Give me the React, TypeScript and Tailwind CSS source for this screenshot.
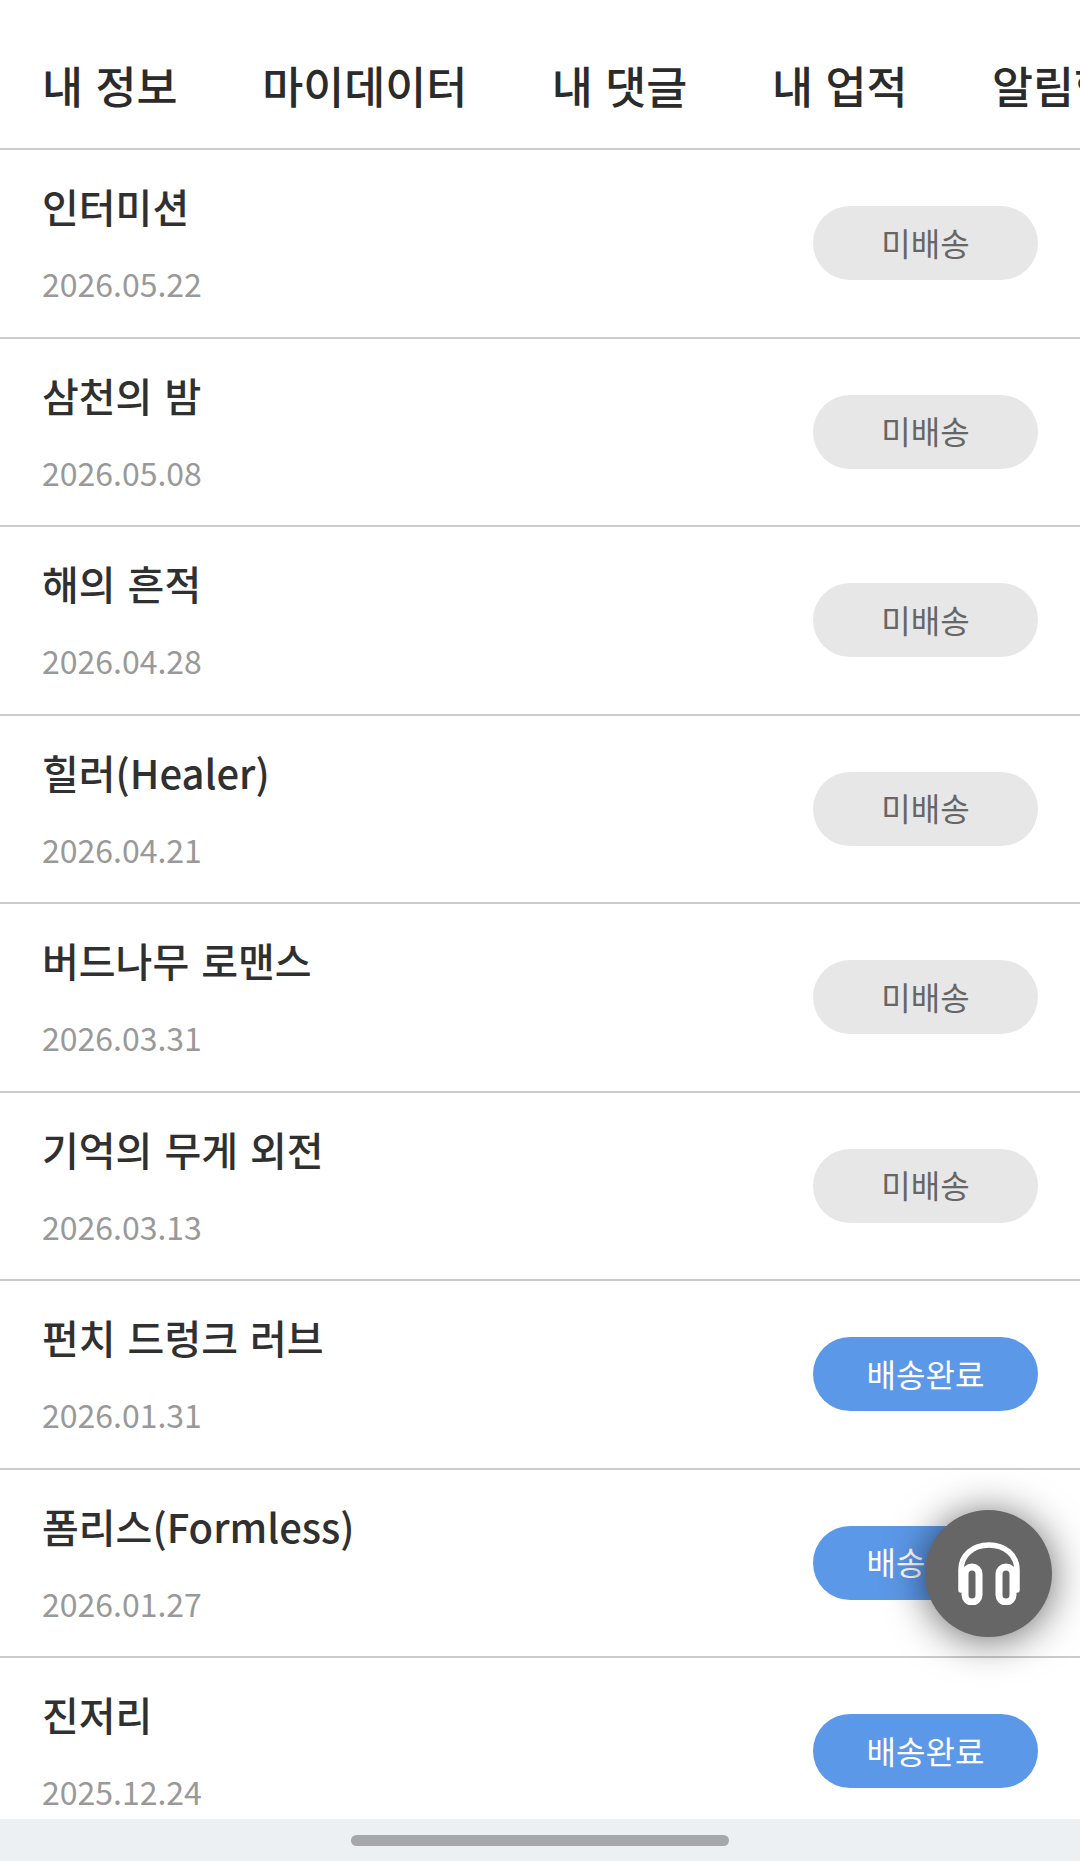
const font = "font-['Noto_Sans_CJK_KR','Noto_Sans',sans-serif]";

const tabs = ['내 정보', '마이데이터', '내 댓글', '내 업적', '알림함'];

const orders = [
  { title: '인터미션', date: '2026.05.22', done: false },
  { title: '삼천의 밤', date: '2026.05.08', done: false },
  { title: '해의 흔적', date: '2026.04.28', done: false },
  { title: '힐러(Healer)', date: '2026.04.21', done: false },
  { title: '버드나무 로맨스', date: '2026.03.31', done: false },
  { title: '기억의 무게 외전', date: '2026.03.13', done: false },
  { title: '펀치 드렁크 러브', date: '2026.01.31', done: true },
  { title: '폼리스(Formless)', date: '2026.01.27', done: true },
  { title: '진저리', date: '2025.12.24', done: true },
];

function HeadphonesIcon() {
  return (
    <svg width="62" height="63" viewBox="0 0 62 63" fill="none" stroke="white" strokeLinecap="round">
      <path d="M3 48V28C3 13 15 3 31 3C47 3 59 13 59 28V48" strokeWidth="5.5" />
      <rect x="7" y="25" width="14" height="35" rx="7" strokeWidth="7" />
      <rect x="41" y="25" width="14" height="35" rx="7" strokeWidth="7" />
    </svg>
  );
}

export default function App() {
  return (
    <div className={`relative flex h-[1861px] w-[1080px] flex-col overflow-hidden bg-white ${font}`}>
      <div className="flex h-[150px] shrink-0 items-center gap-[84.5px] overflow-hidden whitespace-nowrap border-b-2 border-[#cccccc] pl-[42px] pt-[22px] text-[44.6px] font-medium text-[#2b2b2b] [word-spacing:2.5px]">
        {tabs.map((tab) => (
          <span key={tab}>{tab}</span>
        ))}
      </div>

      <div className="min-h-0 flex-1 overflow-hidden">
        {orders.map((order) => (
          <div key={order.title} className="flex h-[188.5px] items-center justify-between border-b-2 border-[#cccccc] pl-[42px] pr-[42px]">
            <div className="flex flex-col pb-[3px]">
              <div className="text-[40px] font-medium leading-[58px] text-[#303030] [word-spacing:3px]">{order.title}</div>
              <div className="mt-[25px] text-[32px] leading-[46px] text-[#999999]">{order.date}</div>
            </div>
            <div
              className={
                order.done
                  ? 'flex h-[74px] w-[225px] items-center justify-center rounded-full bg-[#5c98e8] pb-[3px] text-[32px] text-white'
                  : 'flex h-[74px] w-[225px] items-center justify-center rounded-full bg-[#e8e7e8] pb-[3px] text-[32px] text-[#666666]'
              }
            >
              {order.done ? '배송완료' : '미배송'}
            </div>
          </div>
        ))}
      </div>

      <div className="flex h-[42px] shrink-0 items-center justify-center bg-[#ecf0f3]">
        <div className="h-[11px] w-[378px] rounded-full bg-[#a5a7a9]" />
      </div>

      <div className="absolute left-[925px] top-[1510px] flex h-[127px] w-[127px] items-center justify-center rounded-full bg-[#666666] shadow-[0_3px_40px_rgba(0,0,0,0.6)]">
        <HeadphonesIcon />
      </div>
    </div>
  );
}
